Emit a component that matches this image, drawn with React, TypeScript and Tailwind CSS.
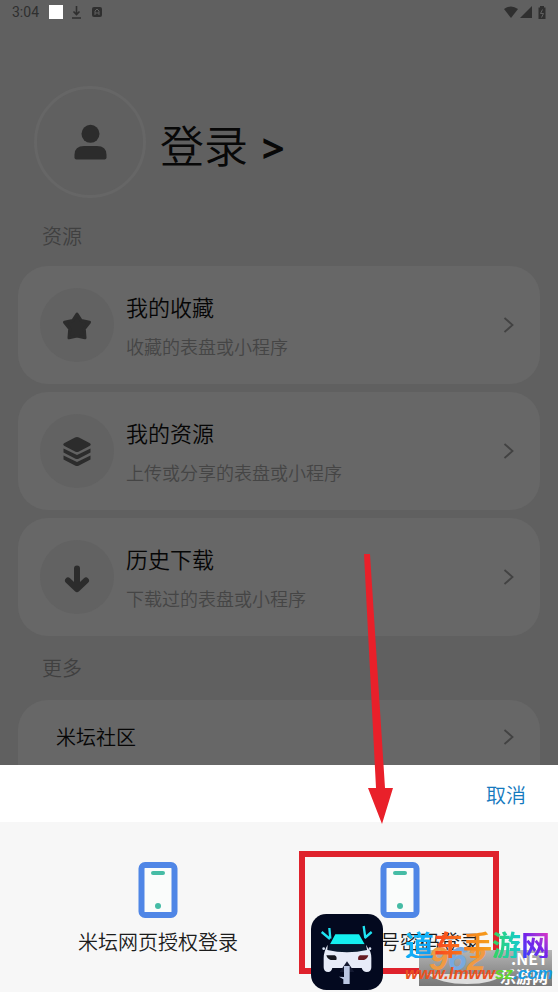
import type { ReactNode } from 'react'

const RESOURCES = [
  { title: '我的收藏', hint: '收藏的表盘或小程序', icon: <StarIcon /> },
  { title: '我的资源', hint: '上传或分享的表盘或小程序', icon: <LayersIcon /> },
  { title: '历史下载', hint: '下载过的表盘或小程序', icon: <DownIcon /> },
]

function StarIcon() {
  return (
    <svg width="30" height="30" viewBox="0 0 30 30" fill="currentColor" stroke="currentColor" strokeWidth="3" strokeLinejoin="round" className="mt-[2px]">
      <path d="M15 3 19.200 9.500 27.500 11.200 22.300 17.800 23 26.800 15 25 7 26.800 7.700 17.800 2.500 11.200 10.800 9.500Z" />
    </svg>
  )
}

function LayersIcon() {
  return (
    <svg width="28" height="30" viewBox="0 0 28 30" fill="currentColor">
      <path d="M12 1.500q2-1 4 0l10.500 5.500q2.500 1.500 0 3L16 15.500q-2 1-4 0L1.500 10q-2.500-1.500 0-3Z" />
      <path d="M0.500 12.500 14 19 27.500 12.500v4L16 22.400q-2 1-4 0L0.500 16.500Z" />
      <path d="M0.500 19.500 14 26 27.500 19.500v4L16 29.400q-2 1-4 0L0.500 23.500Z" />
    </svg>
  )
}

function DownIcon() {
  return (
    <svg width="30" height="30" viewBox="0 0 30 30" fill="none" stroke="currentColor" strokeWidth="6" strokeLinecap="round" strokeLinejoin="round" className="mt-1">
      <path d="M15 4.500v20M6 16.500l9 8.500 9-8.500" />
    </svg>
  )
}

function Chevron() {
  return (
    <svg width="11" height="16" viewBox="0 0 11 16" fill="none" stroke="#424242" strokeWidth="1.8" className="shrink-0">
      <path d="M1.500 1 9.500 8l-8 7" />
    </svg>
  )
}

function PhoneIcon() {
  return (
    <svg width="40" height="56" viewBox="0 0 40 56">
      <rect x="3.5" y="3" width="33" height="50" rx="3.5" fill="#fafcfb" stroke="#4f86e6" strokeWidth="6" />
      <rect x="13" y="9" width="14" height="4" rx="2" fill="#45bca5" />
      <circle cx="20" cy="44" r="3" fill="#45bca5" />
    </svg>
  )
}

function CarLogo() {
  return (
    <svg viewBox="34 42 216 228" className="h-[76px] w-[72px]">
      <rect x="34" y="42" width="216" height="228" rx="46" fill="#03091f" />
      <path d="M66 96 91 117M89 84l3 32M192 78l5 36M216 96l-21 18" stroke="#1fe3f2" strokeWidth="7" fill="none" strokeLinejoin="round" />
      <path d="M107 103h71l17 30H91Z" fill="#14f1f0" />
      <path d="M90 133h105l6 24H84Z" fill="#07182d" />
      <path d="M84 134 83 150q29 7 59 7t60-7l-3-16 7 12q9 8 9 28v28q0 14-14 14-11 0-15-12H98q-3 12-12 12-14 0-14-14v-28q0-20 12-40Z" fill="#e6ebf8" />
      <path d="M80 166h25q8 4 5 14H93q-10-3-13-14Z" fill="#15171f" />
      <path d="M206 166h-25q-8 4-5 14h17q10-3 13-14Z" fill="#671c24" />
      <path d="M142 184 164 216H120Z" fill="#141a32" />
      <path d="M133 198h17v54h-19v-14l-13-8 15 1Z" fill="#bac6e2" />
      <circle cx="72" cy="146" r="4" fill="#dbe4f5" />
      <circle cx="211" cy="146" r="4" fill="#dbe4f5" />
    </svg>
  )
}

function StatusBar() {
  return (
    <header className="flex h-6 items-center justify-between px-3 text-[#2f2f2f]">
      <div className="flex items-center">
        <span className="w-[37px] font-['Roboto',sans-serif] text-sm font-normal">3:04</span>
        <span className="size-[14px] bg-white" />
        <svg width="11" height="13" viewBox="0 0 11 13" fill="none" stroke="currentColor" strokeWidth="1.6" className="ml-2">
          <path d="M5.500 0v8M2.500 5.500l3 3 3-3M1 12h9" />
        </svg>
        <svg width="10" height="10" viewBox="0 0 10 10" className="ml-[10px]">
          <rect width="10" height="10" rx="2" fill="currentColor" />
          <path d="M3 8V4l2-2 2 2v4M3 6h4" fill="none" stroke="#606060" strokeWidth="1" />
        </svg>
      </div>
      <div className="flex items-center">
        <svg width="14" height="12" viewBox="0 0 14 12" fill="currentColor">
          <path d="M0 3q7-5 14 0L7 12Z" />
        </svg>
        <svg width="12" height="12" viewBox="0 0 12 12" fill="currentColor" className="ml-[2px]">
          <path d="M0 12 12 0v12Z" />
        </svg>
        <svg width="8" height="13" viewBox="0 0 8 13" className="ml-[6px]">
          <path d="M2 0h4v1.500h1.500V13h-7V1.500H2Z" fill="currentColor" />
          <path d="M4.500 3.500 2.500 7.500h3l-2 4" fill="none" stroke="#606060" strokeWidth="1" />
        </svg>
      </div>
    </header>
  )
}

function ResourceCard({ title, hint, icon }: { title: string; hint: string; icon: ReactNode }) {
  return (
    <a href="#" className="flex h-[118px] items-center rounded-[30px] bg-[#676767] pr-[26px] pl-[22px]">
      <span className="flex size-[74px] shrink-0 items-center justify-center rounded-full bg-[#626262] text-[#2c2c2c]">
        {icon}
      </span>
      <span className="ml-3 flex-1 pt-[2px]">
        <span className="block text-[22px] leading-8 text-[#060606]">{title}</span>
        <span className="mt-2 block text-lg leading-8 text-[#454545]">{hint}</span>
      </span>
      <Chevron />
    </a>
  )
}

function SheetOption({ label, children }: { label: string; children?: ReactNode }) {
  return (
    <div className="relative">
      <button type="button" className="flex h-[170px] w-full flex-col items-center pt-10">
        <PhoneIcon />
        <span className="mt-2 text-xl leading-8 whitespace-nowrap text-[#1c1c1c]">{label}</span>
      </button>
      {children}
    </div>
  )
}

function Watermark() {
  return (
    <div className="absolute right-[6px] bottom-[6px] h-[56px] w-[147px] whitespace-nowrap">
      <div className="absolute right-0 bottom-0 flex h-9 w-[133px] flex-col items-end bg-gradient-to-b from-[#b5b5b5] to-[#777777] pr-1 font-bold text-white">
        <svg width="90" height="12" viewBox="0 0 90 12" className="absolute bottom-0 left-0">
          <path d="M8 0q14 10 40 10T86 0Z" fill="#dedede" />
        </svg>
        <span className="text-base leading-4">.NET</span>
        <span className="text-base leading-5">乐游网</span>
      </div>
      <span className="absolute top-3 left-6 font-['Liberation_Sans',sans-serif] text-[34px] leading-8 font-bold text-[#ef9a43] italic">
        9<span className="text-[#78a9df]">6</span>2
      </span>
      <div className="absolute top-0 left-0 flex text-[29px] leading-7 font-bold">
        <span className="bg-gradient-to-br from-[#12c8ff] to-[#1593ed] bg-clip-text text-transparent">道</span>
        <span className="bg-gradient-to-r from-[#fa3c20] to-[#f77718] bg-clip-text text-transparent">车</span>
        <span className="bg-gradient-to-r from-[#f57a1c] to-[#f5a21c] bg-clip-text text-transparent">手</span>
        <span className="bg-gradient-to-r from-[#35d455] to-[#16c9d2] bg-clip-text text-transparent">游</span>
        <span className="bg-gradient-to-tr from-[#2840ff] via-[#7521e8] to-[#f321bd] bg-clip-text text-transparent">网</span>
      </div>
      <div className="absolute bottom-0 left-0 font-['Liberation_Sans',sans-serif] text-[17px] leading-6 font-bold italic">
        <span className="text-[#e95221]">www.lmww</span>
        <span className="text-[#62d52c]">sz</span>
        <span className="text-[#159be5]">.com</span>
      </div>
    </div>
  )
}

export default function App() {
  return (
    <div className="h-screen overflow-hidden bg-[#606060] font-['Noto_Sans_CJK_SC',sans-serif] font-[350]">
      <StatusBar />

      <main className="px-[18px]">
        <a href="#" className="mt-[62px] ml-4 flex items-center text-[#080808]">
          <span className="flex size-[112px] items-center justify-center rounded-full border-3 border-[#666666]">
            <svg width="33" height="37" viewBox="0 0 34 37" fill="#2c2c2c">
              <circle cx="17" cy="9.500" r="9.300" />
              <path d="M0.500 34V31q0-9 10-9h13q10 0 10 9v3q0 2-2 2h-29q-2 0-2-2Z" />
            </svg>
          </span>
          <span className="ml-[14px] pt-2 text-[44px] leading-[56px]">
            登录 <span className="ml-1 font-['Noto_Sans',sans-serif] text-[40px] font-bold">&gt;</span>
          </span>
        </a>

        <h2 className="mt-[22px] ml-6 text-xl leading-8 text-[#404040]">资源</h2>
        <div className="mt-[14px] flex flex-col gap-2">
          {RESOURCES.map((item) => (
            <ResourceCard key={item.title} {...item} />
          ))}
        </div>

        <h2 className="mt-4 ml-6 text-xl leading-8 text-[#404040]">更多</h2>
        <a href="#" className="mt-4 flex h-[118px] items-start justify-between rounded-[30px] bg-[#676767] pt-[21px] pr-[26px] pl-[38px] text-xl leading-8 text-[#060606]">
          米坛社区
          <span className="flex h-8 items-center"><Chevron /></span>
        </a>
      </main>

      <section role="dialog" aria-label="登录" className="fixed inset-x-0 bottom-0 bg-[#f7f7f7]">
        <div className="flex h-[57px] items-center justify-end bg-white px-8 pt-[2px]">
          <button type="button" className="text-xl leading-8 text-[#1479be]">取消</button>
        </div>
        <div className="grid grid-cols-2 px-[37px]">
          <SheetOption label="米坛网页授权登录" />
          <SheetOption label="米坛账号密码登录">
            <div className="absolute top-[29px] left-5 h-[123px] w-[200px] border-6 border-[#df222c]" />
            <svg width="34" height="272" viewBox="0 0 34 272" fill="#e9202a" className="absolute bottom-[168px] left-20">
              <path d="M5 2h6l15 234h8L23 272 9 236h8Z" />
            </svg>
            <div className="absolute bottom-[2px] left-8">
              <CarLogo />
            </div>
          </SheetOption>
        </div>
        <Watermark />
      </section>
    </div>
  )
}
